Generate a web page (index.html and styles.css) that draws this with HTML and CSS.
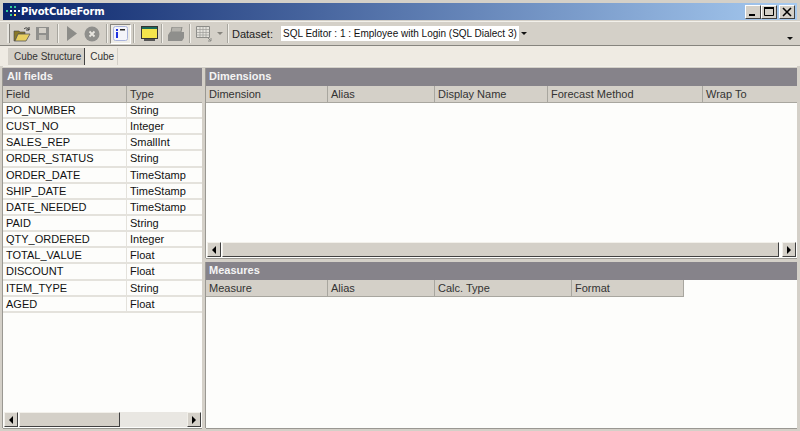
FILE: index.html
```html
<!DOCTYPE html>
<html lang="en">
  <head>
    <meta charset="UTF-8" />
    <title>PivotCubeForm</title>
    <link rel="stylesheet" href="styles.css">
  </head>
  <body>
    <div class="window">
      <!-- Title bar -->
      <div class="titlebar">
        <svg class="app-icon" width="16" height="14" viewBox="0 0 16 14">
          <rect x="5" y="1" width="2" height="2" fill="#3c9" />
          <rect x="9" y="1" width="2" height="2" fill="#3c9" />
          <rect x="1" y="5" width="2" height="2" fill="#3c9" />
          <rect x="5" y="5" width="2" height="2" fill="#fff" />
          <rect x="9" y="5" width="2" height="2" fill="#fff" />
          <rect x="13" y="5" width="2" height="2" fill="#fff" />
          <rect x="5" y="9" width="2" height="2" fill="#3c9" />
          <rect x="9" y="9" width="2" height="2" fill="#fd4" />
        </svg>
        <span class="title-text">PivotCubeForm</span>
        <div class="window-btns">
          <div class="win-btn"><svg width="14" height="12" viewBox="0 0 14 12"><rect x="3" y="8" width="6" height="2" fill="#000" /></svg></div>
          <div class="win-btn"><svg width="14" height="12" viewBox="0 0 14 12"><path d="M2.5 2.5h9v7h-9z" fill="none" stroke="#000" /><rect x="2" y="1" width="10" height="2" fill="#000" /></svg></div>
          <div class="win-btn win-close"><svg width="14" height="12" viewBox="0 0 14 12"><path d="M3 2l8 8M11 2l-8 8" stroke="#000" stroke-width="1.6" /></svg></div>
        </div>
      </div>

      <!-- Toolbar -->
      <div class="toolbar">
        <div class="grip"></div>
        <div class="tool tool-open">
          <svg width="18" height="16" viewBox="0 0 18 16">
            <path d="M1 15V5h5l1 1h5v2H5L2 15z" fill="#8a7a2a" stroke="#444" stroke-width=".6" />
            <path d="M2 15l3-7h12l-4 7z" fill="#e8d060" stroke="#555" stroke-width=".8" />
            <path d="M11 3c2-2 4-1 5 1M16 1v3h-3" fill="none" stroke="#333" />
          </svg>
        </div>
        <div class="tool tool-save">
          <svg width="15" height="15" viewBox="0 0 15 15">
            <path d="M1 1h13v13H1z" fill="#8f8f8c" />
            <rect x="4" y="2" width="7" height="5" fill="#d4d0c8" />
            <rect x="4" y="9" width="7" height="5" fill="#bdbab3" />
          </svg>
        </div>
        <div class="sep sep-a"></div>
        <div class="tool tool-play">
          <svg width="10" height="15" viewBox="0 0 10 15"><path d="M0 0l10 7.5L0 15z" fill="#8c8c88" /></svg>
        </div>
        <div class="tool tool-stop">
          <svg width="16" height="16" viewBox="0 0 16 16">
            <circle cx="8" cy="8" r="7.5" fill="#8f8f8c" />
            <path d="M5.5 5.5l5 5M10.5 5.5l-5 5" stroke="#e8e6e0" stroke-width="1.8" />
          </svg>
        </div>
        <div class="sep sep-b"></div>
        <div class="tool-on">
          <svg width="15" height="15" viewBox="0 0 15 15">
            <rect x=".5" y=".5" width="14" height="14" rx="2" fill="#f4f4fa" stroke="#a9b3dc" />
            <rect x="3" y="3" width="2" height="2" fill="#1e32e0" />
            <rect x="3" y="6" width="2" height="6" fill="#1e32e0" />
            <rect x="7" y="3" width="5" height="1.5" fill="#222" />
          </svg>
        </div>
        <div class="sep sep-c"></div>
        <div class="tool tool-window">
          <svg width="17" height="15" viewBox="0 0 17 15">
            <rect x=".5" y=".5" width="16" height="12" fill="#f4e44c" stroke="#333" />
            <rect x="1" y="1" width="15" height="2" fill="#1a6a5a" />
            <rect x="3" y="13" width="11" height="2" fill="#555" />
          </svg>
        </div>
        <div class="sep sep-d"></div>
        <div class="tool tool-print">
          <svg width="18" height="14" viewBox="0 0 18 14">
            <path d="M5 0h10l-1 5H4z" fill="#b5b3ad" stroke="#8c8c88" />
            <path d="M3 5h14v6l-2 3H1V8z" fill="#8f8f8c" />
          </svg>
        </div>
        <div class="sep sep-e"></div>
        <div class="tool tool-grid">
          <svg width="16" height="16" viewBox="0 0 16 16">
            <path d="M.5 .5h13v11H.5z" fill="#e4e2dc" stroke="#8c8c88" />
            <path d="M.5 3.5h13M.5 6.5h13M.5 9h13M4 1v10M7 1v10M10 1v10" stroke="#9c9c98" stroke-width=".7" />
            <path d="M11 11l4 4M15 12v3h-3" stroke="#8c8c88" fill="none" />
          </svg>
        </div>
        <div class="caret caret-grey"></div>
        <div class="sep sep-f"></div>
        <span class="dataset-label">Dataset:</span>
        <div class="combo">
          <span class="combo-text">SQL Editor : 1 : Employee with Login (SQL Dialect 3)</span>
          <div class="combo-btn"><div class="caret"></div></div>
        </div>
        <div class="caret toolbar-more"></div>
      </div>

      <!-- Tabs -->
      <div class="tabs">
        <div class="tab tab-active">Cube Structure</div>
        <div class="tab">Cube</div>
      </div>

      <div class="main">
        <!-- All fields -->
        <div class="pane pane-left">
          <div class="pane-title">All fields</div>
          <div class="grid-head">
            <div class="col col-field">Field</div>
            <div class="col col-type">Type</div>
          </div>
          <div class="rows">
            <div class="row"><div class="cell col-field">PO_NUMBER</div><div class="cell">String</div></div>
            <div class="row"><div class="cell col-field">CUST_NO</div><div class="cell">Integer</div></div>
            <div class="row"><div class="cell col-field">SALES_REP</div><div class="cell">SmallInt</div></div>
            <div class="row"><div class="cell col-field">ORDER_STATUS</div><div class="cell">String</div></div>
            <div class="row"><div class="cell col-field">ORDER_DATE</div><div class="cell">TimeStamp</div></div>
            <div class="row"><div class="cell col-field">SHIP_DATE</div><div class="cell">TimeStamp</div></div>
            <div class="row"><div class="cell col-field">DATE_NEEDED</div><div class="cell">TimeStamp</div></div>
            <div class="row"><div class="cell col-field">PAID</div><div class="cell">String</div></div>
            <div class="row"><div class="cell col-field">QTY_ORDERED</div><div class="cell">Integer</div></div>
            <div class="row"><div class="cell col-field">TOTAL_VALUE</div><div class="cell">Float</div></div>
            <div class="row"><div class="cell col-field">DISCOUNT</div><div class="cell">Float</div></div>
            <div class="row"><div class="cell col-field">ITEM_TYPE</div><div class="cell">String</div></div>
            <div class="row"><div class="cell col-field">AGED</div><div class="cell">Float</div></div>
          </div>
          <div class="hscroll">
            <div class="sb-btn"><div class="arrow-left"></div></div>
            <div class="sb-thumb sb-thumb-left"></div>
            <div class="sb-track"></div>
            <div class="sb-btn"><div class="arrow-right"></div></div>
          </div>
        </div>

        <div class="pane-right">
          <!-- Dimensions -->
          <div class="pane pane-dims">
            <div class="pane-title title-right">Dimensions</div>
            <div class="grid-head">
              <div class="col dim-1">Dimension</div>
              <div class="col dim-2">Alias</div>
              <div class="col dim-3">Display Name</div>
              <div class="col dim-4">Forecast Method</div>
              <div class="col dim-5">Wrap To</div>
            </div>
            <div class="rows"></div>
            <div class="hscroll">
              <div class="sb-btn"><div class="arrow-left"></div></div>
              <div class="sb-thumb sb-thumb-wide"></div>
              <div class="sb-btn"><div class="arrow-right"></div></div>
            </div>
          </div>

          <!-- Measures -->
          <div class="pane pane-measures">
            <div class="pane-title title-right">Measures</div>
            <div class="grid-head grid-head-short">
              <div class="col dim-1">Measure</div>
              <div class="col dim-2">Alias</div>
              <div class="col mea-3">Calc. Type</div>
              <div class="col mea-4">Format</div>
            </div>
            <div class="rows"></div>
          </div>
        </div>
      </div>
    </div>
  </body>
</html>
```

FILE: styles.css
```css
* {
  margin: 0;
  padding: 0;
  box-sizing: border-box;
}

body {
  font-family: "Liberation Sans", Arial, sans-serif;
  font-size: 11px;
  color: #222;
  overflow: hidden;
}

.window {
  width: 800px;
  height: 431px;
  display: flex;
  flex-direction: column;
  background: #d4d0c8;
  padding: 3px;
}

/* Title bar */
.titlebar {
  height: 17px;
  display: flex;
  align-items: center;
  padding-left: 2px;
  background: linear-gradient(90deg, #0a246a 0%, #a6caf0 100%);
  color: white;
  flex-shrink: 0;
}

.title-text {
  font-family: "DejaVu Sans", sans-serif;
  font-weight: bold;
  font-size: 10px;
  letter-spacing: -0.2px;
}

.window-btns {
  margin-left: auto;
  margin-right: 2px;
  display: flex;
}

.win-btn {
  width: 16px;
  height: 14px;
  background: #d4d0c8;
  border: 1px solid;
  border-color: #fff #404040 #404040 #fff;
  display: flex;
  align-items: center;
  justify-content: center;
}

.win-close {
  margin-left: 2px;
}

/* Toolbar */
.toolbar {
  height: 25px;
  margin: 1px -3px 0;
  display: flex;
  align-items: center;
  background: #d4d0c8;
  border-top: 1px solid #f2f0ea;
  border-bottom: 1px solid #86847e;
  padding-left: 7px;
  flex-shrink: 0;
}

.grip {
  width: 3px;
  height: 19px;
  background: #e8e6e0;
  border-right: 1px solid #86847e;
}

.tool {
  display: flex;
  align-items: center;
}

.tool-open {
  margin-left: 3px;
}

.tool-save {
  margin-left: 4px;
}

.tool-play {
  margin-left: 8px;
}

.tool-stop {
  margin-left: 7px;
}

.tool-on {
  width: 21px;
  height: 20px;
  margin-left: 2px;
  display: flex;
  align-items: center;
  justify-content: center;
  background: #eeece6;
  border: 1px solid;
  border-color: #86847e #fff #fff #86847e;
}

.tool-window {
  margin-left: 6px;
}

.tool-print {
  margin-left: 4px;
}

.tool-grid {
  margin-left: 5px;
}

.sep {
  width: 2px;
  height: 19px;
  border-left: 1px solid #a8a69f;
  border-right: 1px solid #f2f0ea;
}

.sep-a {
  margin-left: 7px;
}

.sep-b {
  margin-left: 6px;
}

.sep-c {
  margin-left: 2px;
}

.sep-d {
  margin-left: 3px;
}

.sep-e {
  margin-left: 4px;
}

.sep-f {
  margin-left: 4px;
}

.caret {
  width: 0;
  height: 0;
  border-left: 3px solid transparent;
  border-right: 3px solid transparent;
  border-top: 3px solid #111;
}

.caret-grey {
  margin-left: 5px;
  border-top-color: #86847e;
}

.dataset-label {
  margin-left: 3px;
  width: 49px;
  flex-shrink: 0;
}

.combo {
  width: 247px;
  height: 15px;
  background: white;
  display: flex;
  align-items: center;
  padding-left: 2px;
}

.combo-text {
  flex: 1;
  font-size: 10px;
  white-space: nowrap;
  color: #111;
}

.combo-btn {
  width: 9px;
  height: 15px;
  background: #d4d0c8;
  display: flex;
  align-items: center;
  justify-content: center;
}

.toolbar-more {
  margin-left: auto;
  margin-right: 7px;
  margin-top: 9px;
}

/* Tabs */
.tabs {
  height: 20px;
  margin: 0 -3px;
  display: flex;
  align-items: stretch;
  padding: 2px 0 1px 8px;
  background: #efebe3;
  font-size: 10px;
  white-space: nowrap;
  flex-shrink: 0;
}

.tab {
  padding: 3px 3px 0 5px;
  border-right: 1px solid #d4d0c8;
  color: #333;
}

.tab-active {
  padding-left: 6px;
  background: #d4d0c8;
  border-right: 1px solid #444;
}

/* Panes */
.main {
  flex: 1;
  display: flex;
  gap: 4px;
  min-height: 0;
  padding-top: 1px;
  border-top: 1px solid #f2f0ea;
}

.pane {
  display: flex;
  flex-direction: column;
  background: #fdfdfb;
  min-height: 0;
  box-shadow: -1px 0 0 #9a9892, 0 1px 0 #9a9892;
}

.pane-left {
  width: 199px;
  flex-shrink: 0;
}

.pane-right {
  flex: 1;
  display: flex;
  flex-direction: column;
  gap: 4px;
  min-width: 0;
}

.pane-dims {
  height: 190px;
  flex-shrink: 0;
}

.pane-measures {
  flex: 1;
}

.pane-title {
  height: 18px;
  line-height: 17px;
  padding-left: 4px;
  background: #86838a;
  color: #f4f4f4;
  font-weight: bold;
  flex-shrink: 0;
}

.title-right {
  padding-left: 3px;
}

.grid-head {
  height: 17px;
  display: flex;
  background: #d4d0c8;
  border-bottom: 1px solid #a8a69f;
  flex-shrink: 0;
}

.grid-head-short {
  width: 478px;
  border-right: 1px solid #a8a69f;
}

.col {
  line-height: 16px;
  padding-left: 3px;
  border-right: 1px solid #a8a69f;
  white-space: nowrap;
  color: #333;
}

.col:last-child {
  border-right: none;
}

.col-field {
  width: 124px;
  flex-shrink: 0;
}

.col-type {
  flex: 1;
}

.dim-1 {
  width: 122px;
}

.dim-2 {
  width: 107px;
}

.dim-3 {
  width: 113px;
}

.dim-4 {
  width: 155px;
}

.dim-5 {
  flex: 1;
}

.mea-3 {
  width: 137px;
}

.mea-4 {
  flex: 1;
}

.rows {
  flex: 1;
  min-height: 0;
}

.row {
  height: 16.15px;
  display: flex;
  border-bottom: 2px solid #e4e2dc;
}

.cell {
  line-height: 14px;
  padding-left: 3px;
  white-space: nowrap;
  color: #111;
}

.cell.col-field {
  border-right: 1px solid #e4e2dc;
}

/* Scrollbars */
.hscroll {
  height: 16px;
  display: flex;
  flex-shrink: 0;
  padding: 0 1px;
  background: #fdfdfb;
}

.sb-btn {
  width: 14px;
  height: 15px;
  background: #d4d0c8;
  border: 1px solid;
  border-color: #f2f0ea #404040 #404040 #f2f0ea;
  display: flex;
  align-items: center;
  justify-content: center;
  flex-shrink: 0;
}

.sb-thumb {
  height: 15px;
  margin-left: 1px;
  background: #d4d0c8;
  border: 1px solid;
  border-color: #f2f0ea #404040 #404040 #f2f0ea;
}

.sb-thumb-left {
  width: 101px;
}

.sb-thumb-wide {
  flex: 1;
  margin-right: 3px;
}

.sb-track {
  flex: 1;
  height: 15px;
  background: #e9e7e2;
}

.arrow-left {
  border-top: 4px solid transparent;
  border-bottom: 4px solid transparent;
  border-right: 4px solid #000;
}

.arrow-right {
  border-top: 4px solid transparent;
  border-bottom: 4px solid transparent;
  border-left: 4px solid #000;
}
```
